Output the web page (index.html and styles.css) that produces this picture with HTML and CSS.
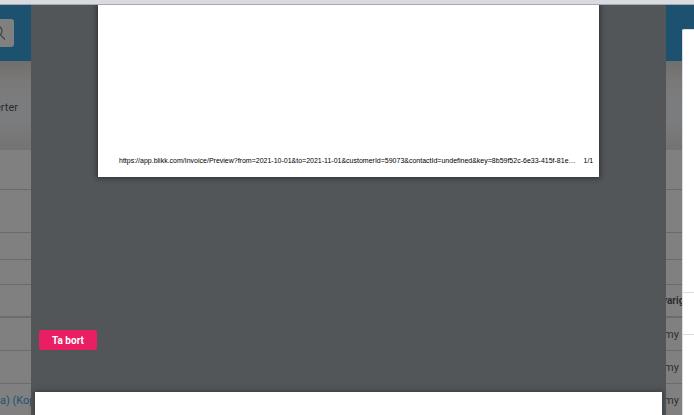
FILE: index.html
```html
<!DOCTYPE html>
<html lang="sv">
<head>
  <meta charset="UTF-8" />
  <meta name="viewport" content="width=device-width, initial-scale=1.0" />
  <title>Faktura</title>
  <link rel="stylesheet" href="styles.css">
</head>
<body>
  <div class="browser-edge"></div>

  <div class="app">
    <header class="topbar">
      <button class="search" type="button" aria-label="Sök">
        <svg width="14" height="16" viewBox="0 0 14 16" fill="none" stroke="#3f4447" stroke-width="1.2">
          <circle cx="5" cy="6" r="5" />
          <path d="M8.5 9.8 L13 14.5" />
        </svg>
      </button>
    </header>

    <nav class="tabs">
      <a class="tab" href="#">erter</a>
    </nav>

    <div class="filter filter-main"></div>
    <div class="filter filter-options"></div>
    <div class="filter filter-small"></div>
    <div class="filter filter-last"></div>

    <table class="list">
      <thead>
        <tr><th></th><th class="owner">varig</th></tr>
      </thead>
      <tbody>
        <tr><td></td><td class="owner">my</td></tr>
        <tr><td></td><td class="owner">my</td></tr>
        <tr><td><a href="#">a) (Kop</a></td><td class="owner">my</td></tr>
      </tbody>
    </table>

    <main class="viewer">
      <section class="pdf-page">
        <footer class="pdf-footer">
          <span>https://app.blikk.com/Invoice/Preview?from=2021-10-01&amp;to=2021-11-01&amp;customerId=59073&amp;contactId=undefined&amp;key=8b59f52c-6e33-415f-81e…</span>
          <span>1/1</span>
        </footer>
      </section>
      <button class="remove" type="button">Ta bort</button>
      <section class="next-page"></section>
    </main>

    <aside class="drawer">
      <div class="drawer-body"></div>
      <div class="drawer-row"></div>
    </aside>
  </div>
</body>
</html>
```

FILE: styles.css
```css
* {
  box-sizing: border-box;
}

body {
  display: flex;
  flex-direction: column;
  height: 100vh;
  margin: 0;
  overflow: hidden;
  font-family: Roboto, Arial, sans-serif;
  font-size: 11px;
  color: #2a2d2f;
}

.browser-edge {
  flex: none;
  height: 5px;
  background-color: #dadbe0;
  border-bottom: 1px solid #a9aaae;
}

.app {
  position: relative;
  flex: 1;
  overflow: hidden;
  background-color: #808080;
}

.topbar {
  height: 56px;
  padding-top: 14px;
  background-color: #1c5270;
}

.search {
  display: flex;
  align-items: center;
  width: 14px;
  height: 28px;
  padding: 0;
  border: none;
  border-radius: 0 3px 3px 0;
  background-color: #808080;
}

.search svg {
  flex: none;
  margin-left: -8px;
}

.tabs {
  display: flex;
  align-items: center;
  height: 89px;
  padding-top: 4px;
  background: linear-gradient(#706f6e, #7a7978 20px, #7b7c7e 40px, #7b7c7e 60px, #737373);
}

.tab {
  margin-left: -5px;
  color: #2a2d2f;
  text-decoration: none;
}

.filter {
  border-bottom: 1px solid #686a6b;
}

.filter-main {
  height: 40px;
}

.filter-options {
  height: 43px;
}

.filter-small {
  height: 27px;
}

.filter-last {
  height: 25px;
}

.list {
  width: 100%;
  table-layout: fixed;
  border-spacing: 0;
}

.list th,
.list td {
  height: 33px;
  padding: 0;
  text-align: left;
  border-bottom: 1px solid #6b6c6d;
}

.list th {
  font-size: 10px;
  border-bottom: 2px solid #6b6c6d;
}

.list a {
  color: #1c5270;
  text-decoration: none;
}

.list .owner {
  width: 32px;
}

.list td.owner {
  padding-left: 2px;
}

/* document preview on top of the list */
.viewer {
  position: absolute;
  top: 0;
  bottom: 0;
  left: 31px;
  right: 28px;
  display: flex;
  flex-direction: column;
  background-color: #525659;
}

.pdf-page {
  display: flex;
  flex-direction: column;
  justify-content: flex-end;
  min-height: 172px;
  margin: 0 67px;
  padding: 0 21px 12px;
  background-color: #fff;
  box-shadow: 0 0 5px 1px #2b2d2f;
}

.pdf-footer {
  display: flex;
  gap: 8px;
  font-family: "Liberation Sans", Arial, sans-serif;
  font-size: 7px;
  line-height: 9px;
  white-space: nowrap;
  color: #000;
}

.remove {
  align-self: flex-start;
  width: 58px;
  height: 20px;
  margin: auto 8px 42px;
  padding: 0;
  border: none;
  border-radius: 2px;
  background-color: #e91e63;
  color: #fff;
  font-family: Roboto, Arial, sans-serif;
  font-size: 10px;
  font-weight: bold;
  cursor: pointer;
}

.next-page {
  flex: none;
  height: 23px;
  margin: 0 4px;
  background-color: #fff;
  box-shadow: 0 0 5px 1px #3a3d3f;
}

.drawer {
  position: absolute;
  top: 24px;
  bottom: 0;
  right: 0;
  width: 12px;
  border-top: 1px solid #dcdce4;
  border-left: 1px solid #dcdce4;
  border-radius: 2px 0 0 0;
  background-color: #fff;
}

.drawer-body {
  height: 263px;
  border-bottom: 1px solid #dcdcdc;
}

.drawer-row {
  height: 42px;
  border-bottom: 1px solid #dcdcdc;
}
```
